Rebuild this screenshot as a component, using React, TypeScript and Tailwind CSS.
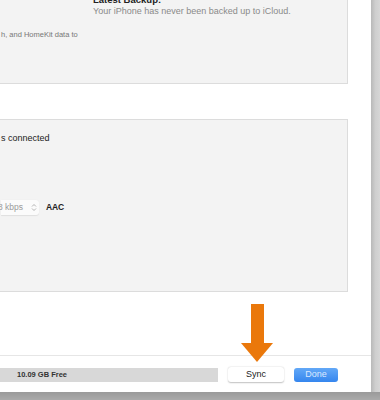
import React from "react";

export default function App() {
  const font = { fontFamily: '"Liberation Sans", Arial, sans-serif' };
  return (
    <div className="w-[380px] h-[400px] flex flex-col overflow-hidden bg-[#d4d4d4]" style={font}>
      <div className="flex h-[392px]">
        <div className="w-[371px] h-[392px] bg-white overflow-hidden flex flex-col">
          {/* top panel */}
          <div className="-mt-[20px] -ml-[20px] w-[368px] h-[104px] shrink-0 bg-[#f3f3f3] border border-[#dcdcdc] flex">
            <div className="w-[112px] pl-[20px] pt-[49px] text-[7.5px] text-[#777] whitespace-nowrap leading-[10px]">
              h, and HomeKit data to
            </div>
            <div className="pt-[13px] leading-[11px] whitespace-nowrap">
              <div className="text-[9.5px] font-bold text-[#222]">Latest Backup:</div>
              <div className="text-[9px] text-[#8a8a8a] mt-[0.5px]">Your iPhone has never been backed up to iCloud.</div>
            </div>
          </div>
          {/* second panel */}
          <div className="mt-[35px] -ml-[20px] w-[368px] h-[173px] shrink-0 bg-[#f3f3f3] border border-[#dcdcdc] flex flex-col pl-[20px]">
            <div className="mt-[13px] text-[9px] text-[#222] leading-[11px] whitespace-nowrap">s connected</div>
            <div className="mt-[56px] flex items-center h-[15px]">
              <div className="w-[38px] h-[15px] bg-[#fbfbfb] rounded-r-[3px] flex items-center justify-between pr-[2px] shadow-[0_0.5px_1px_rgba(0,0,0,0.08)]">
                <span className="text-[8.5px] text-[#9a9a9a] -ml-[3px] whitespace-nowrap">8 kbps</span>
                <svg width="6" height="9" viewBox="0 0 6 9">
                  <path d="M1 3.5 L3 1.5 L5 3.5 M1 5.5 L3 7.5 L5 5.5" fill="none" stroke="#aaa" strokeWidth="0.9" />
                </svg>
              </div>
              <span className="ml-[7px] text-[8.5px] text-[#222] font-bold tracking-[-0.2px]">AAC</span>
            </div>
          </div>
          {/* arrow area */}
          <div className="h-[64px] shrink-0 relative z-10">
            <svg width="371" height="64" viewBox="0 0 371 64" className="block overflow-visible">
              <line x1="0" y1="63.5" x2="371" y2="63.5" stroke="#e6e6e6" strokeWidth="1" />
              <rect x="251" y="12" width="13" height="40" fill="#ea780b" />
              <polygon points="241,51 273,51 257,70" fill="#ea780b" />
            </svg>
          </div>
          {/* bottom bar */}
          <div className="flex items-center mt-[11px] h-[15px]">
            <div className="w-[218px] h-[14px] bg-[#d8d8d8] flex items-center pl-[17px]">
              <span className="text-[7.5px] font-bold text-[#333] whitespace-nowrap">10.09 GB Free</span>
            </div>
            <div className="ml-[10px] w-[56px] h-[15px] bg-white rounded-[3px] shadow-[0_0.5px_1.5px_rgba(0,0,0,0.25)] flex items-center justify-center text-[9px] text-[#222]">
              Sync
            </div>
            <div className="ml-[10px] w-[44px] h-[14px] rounded-[3px] bg-gradient-to-b from-[#62a8f7] to-[#3586ee] flex items-center justify-center text-[9px] text-[#dce9ff]">
              Done
            </div>
          </div>
        </div>
        <div className="w-[9px] h-[392px] bg-gradient-to-r from-[#b9b9b9] via-[#cfcfcf] to-[#d6d6d6]" />
      </div>
      <div className="h-[8px] bg-gradient-to-b from-[#9a9a9a] to-[#aaaaaa]" />
    </div>
  );
}
